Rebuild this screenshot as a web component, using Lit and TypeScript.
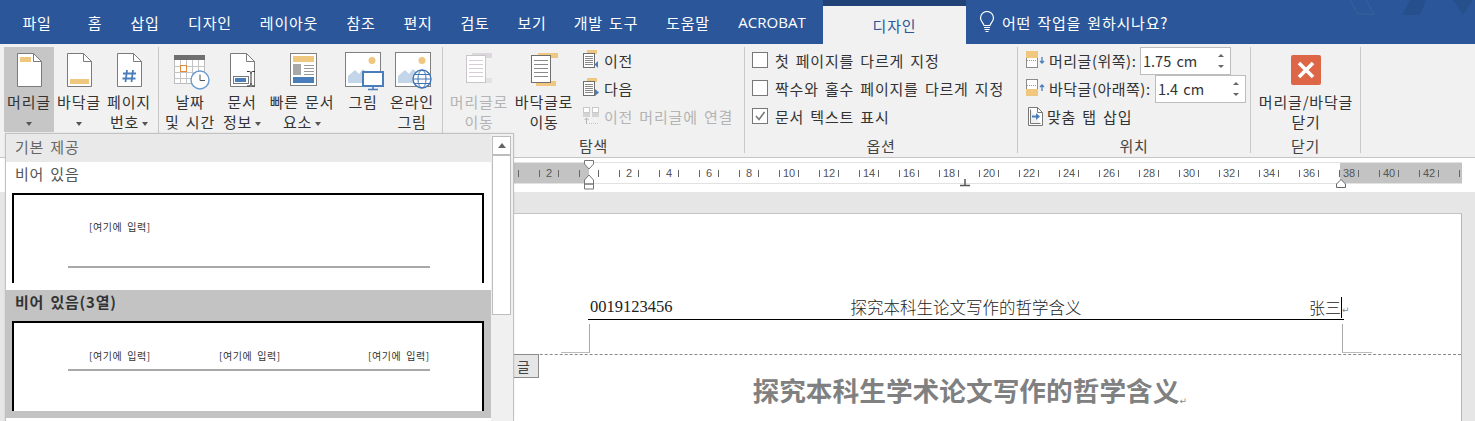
import { LitElement, html, css, svg } from "lit";
import { customElement } from "lit/decorators.js";

const S = "#7b7b7b";
const O = "#efc77e";
const B = "#4a7ebb";

const page = svg`<path d="M9.5 3.5H25.5L33.5 11.5V36.5H9.5Z" fill="#fff" stroke="${S}"/><path d="M25.5 3.5V11.5H33.5" fill="none" stroke="${S}"/>`;
const lines = (x: number, w: number, ys: number[], c: string) =>
  ys.map((y) => svg`<path d="M${x} ${y}.5h${w}" stroke="${c}"/>`);

const pictureBase = (x: number) => svg`
  <rect x="${x}.5" y="2.5" width="35" height="34" fill="#fff" stroke="#808080"/>
  <circle cx="${x + 27}" cy="10.5" r="3.5" fill="${O}"/>
  <path d="M${x + 3} 33V26L${x + 10} 20L${x + 14} 24L${x + 18} 19L${x + 26} 26V33Z" fill="#c3d5e9"/>`;

const large: Record<string, unknown> = {
  header: svg`${page}<rect x="12" y="7" width="11" height="5" fill="${O}"/>`,
  footer: svg`${page}<rect x="12" y="29" width="19" height="5" fill="${O}"/>`,
  number: svg`${page}<path d="M19 20L17.5 32M25 20L23.5 32M15 23.5H28M14.5 28.5H27.5" fill="none" stroke="${B}" stroke-width="1.8"/>`,
  date: svg`
    <rect x="5.5" y="5.5" width="30" height="28" fill="#fff" stroke="#bdbdbd"/>
    <rect x="5" y="5" width="31" height="5" fill="#6f6f6f"/>
    <path d="M5 16.5H36M5 22.5H36M5 28.5H36M11.5 10V33M17.5 10V33M23.5 10V33M29.5 10V33" stroke="#c4c4c4" fill="none"/>
    <rect x="11.5" y="15.5" width="6" height="6" fill="#fff" stroke="#e08a3c"/>
    <circle cx="31" cy="30" r="9" fill="#fff" stroke="#6c9bd0" stroke-width="1.4"/>
    <path d="M31 24.5V30.5H36" fill="none" stroke="#555"/>`,
  info: svg`${page}
    <rect x="12.5" y="26.5" width="15" height="7" fill="#fff" stroke="#777"/>
    <rect x="14" y="28" width="11" height="4" fill="${B}"/>
    <path d="M26 21.5H28.5C30 21.5 30 23 30 24V33C30 34 30 36 28 36H26M34 21.5H31.5C30 21.5 30 23 30 24M34 36H32C30 36 30 34 30 33" fill="none" stroke="#333"/>`,
  parts: svg`
    <rect x="9.5" y="3.5" width="26" height="32" fill="#fff" stroke="#808080"/>
    <rect x="12" y="6" width="21" height="6" fill="${O}"/>
    <rect x="12" y="14" width="8" height="11" fill="#a8a8a8"/>
    ${lines(23, 10, [15, 18, 21, 24], "#999")}
    <rect x="12" y="27" width="21" height="6" fill="${B}"/>`,
  picture: svg`${pictureBase(3)}
    <rect x="21" y="22" width="20" height="14" fill="#fff" stroke="#4a7ebb" stroke-width="2"/>
    <path d="M31 36V39M26 39.5H36" stroke="${B}" stroke-width="1.6"/>`,
  online: svg`${pictureBase(4)}
    <circle cx="31" cy="29" r="9" fill="#fff" stroke="#3f74b5" stroke-width="1.4"/>
    <ellipse cx="31" cy="29" rx="4" ry="9" fill="none" stroke="#3f74b5"/>
    <path d="M22 29H40M23.5 24.5H38.5M23.5 33.5H38.5" stroke="#3f74b5" fill="none"/>`,
  toHeader: svg`
    <rect x="14" y="3" width="20" height="5" fill="#dcd7dc"/>
    <rect x="14" y="28" width="20" height="5" fill="#e2e2e2"/>
    <rect x="8.5" y="5.5" width="19" height="27" fill="#fff" stroke="#c9c6c9"/>
    ${lines(11, 14, [10, 14, 18, 22, 26], "#d8ccd8")}`,
  toFooter: svg`
    <rect x="15" y="3" width="20" height="5" fill="${O}"/>
    <rect x="13" y="31" width="20" height="5" fill="${O}"/>
    <rect x="8.5" y="5.5" width="19" height="27" fill="#fff" stroke="#6f6f6f"/>
    ${lines(11, 14, [10, 14, 18, 22, 26], "#8a8a8a")}`,
};

const navIcon = (dir: number) => svg`
  <svg class="ic16" viewBox="0 0 18 20" width="18" height="20">
    <rect x="5" y="0" width="10" height="4" fill="${O}"/>
    <rect x="1.5" y="3.5" width="11" height="14" fill="#fff" stroke="#6f6f6f"/>
    ${lines(3, 8, [6, 8, 10, 12, 14], "#888")}
    <path d="${dir < 0 ? "M16 11V18L12.5 14.5Z" : "M13 11V18L17 14.5Z"}" fill="${B}"/>
  </svg>`;

const linkIcon = svg`
  <svg class="ic16" viewBox="0 0 18 20" width="18" height="20">
    <rect x="1.5" y="1.5" width="6" height="5" fill="#fff" stroke="#c8c8c8"/>
    <rect x="10.5" y="1.5" width="6" height="5" fill="#fff" stroke="#c8c8c8"/>
    <rect x="1" y="7" width="7" height="4" fill="#d4d4d4"/>
    <rect x="10" y="7" width="7" height="4" fill="#d4d4d4"/>
    <path d="M4.5 18V12M2.5 14L4.5 12L6.5 14" fill="none" stroke="#b5b5b5"/>
    <path d="M7 17.5H17" stroke="#c4c4c4" stroke-dasharray="1 1"/>
  </svg>`;

const posIcon = (top: boolean) => svg`
  <svg viewBox="0 0 20 18" width="20" height="18" class="posic">
    <rect x="0.5" y="0.5" width="11" height="16" fill="#fff" stroke="#8a8a8a"/>
    <rect x="0" y="${top ? 0 : 10}" width="12" height="7" fill="${O}"/>
    <path d="${top ? "M1 9.5H12" : "M1 6.5H12"}" stroke="#999" stroke-dasharray="1 1"/>
    <path d="${top ? "M16 6V12M14 10L16 12L18 10" : "M16 6V12M14 8L16 6L18 8"}" fill="none" stroke="${B}" stroke-width="1.3"/>
  </svg>`;

const tabIcon = svg`
  <svg viewBox="0 0 18 20" width="18" height="20" class="posic">
    <path d="M2.5 1.5H11.5L16.5 6.5V19.5H2.5Z M4.5 3.5V17.5H14.5" fill="#fff" stroke="#777"/>
    <path d="M11.5 1.5V6.5H16.5" fill="none" stroke="#777"/>
    <path d="M6 10.5H11" stroke="${B}" stroke-width="2"/><path d="M10 7L14 10.5L10 14Z" fill="${B}"/>
  </svg>`;

const TABS: [string, number][] = [
  ["파일", 68], ["홈", 48], ["삽입", 52], ["디자인", 78], ["레이아웃", 80], ["참조", 64],
  ["편지", 50], ["검토", 64], ["보기", 50], ["개발 도구", 98], ["도움말", 66], ["ACROBAT", 102],
];

type Btn = { a: string; b?: string; icon: string; w: number; caret?: 1 | 2; off?: boolean; sel?: boolean };
const G1: Btn[] = [
  { a: "머리글", icon: "header", w: 50, caret: 2, sel: true },
  { a: "바닥글", icon: "footer", w: 50, caret: 2 },
  { a: "페이지", b: "번호", icon: "number", w: 50, caret: 1 },
];
const G2: Btn[] = [
  { a: "날짜", b: "및 시간", icon: "date", w: 62 },
  { a: "문서", b: "정보", icon: "info", w: 42, caret: 1 },
  { a: "빠른 문서", b: "요소", icon: "parts", w: 78, caret: 1 },
  { a: "그림", icon: "picture", w: 44 },
  { a: "온라인", b: "그림", icon: "online", w: 54 },
];
const G3: Btn[] = [
  { a: "머리글로", b: "이동", icon: "toHeader", w: 68, off: true },
  { a: "바닥글로", b: "이동", icon: "toFooter", w: 62 },
];

const CELLS = Array.from({ length: 25 }, (_, i) => {
  const n = (i - 2) * 2;
  return n === 0 || n > 42 ? "" : String(Math.abs(n));
});

@customElement("app-root")
export class AppRoot extends LitElement {
  static styles = css`
    :host { display: block; position: relative; width: 1475px; height: 421px; overflow: hidden; background: #fff;
      font-family: "Noto Sans CJK KR", "Liberation Sans", sans-serif; font-size: 15px; color: #333; letter-spacing: .8px; word-spacing: 2px; }
    .titlebar { position: relative; display: flex; height: 44px; background: #2b579a; padding-left: 3px; color: #fff; }
    .tab { display: flex; align-items: center; justify-content: center; white-space: nowrap; }
    .tab.latin { font-family: "Open Sans", "Liberation Sans", sans-serif; font-size: 15px; letter-spacing: 0; }
    .ctx { width: 143px; border-top: 6px solid #204277; background: #f1f1f1; color: #2b579a; display: flex; align-items: center; justify-content: center; }
    .tell { display: flex; align-items: center; gap: 7px; padding-left: 13px; }
    .deco { position: absolute; right: 0; top: 0; }
    .ribbon { display: flex; padding: 3px 0 0 4px; box-sizing: border-box; background: #f1f1f1; border-bottom: 1px solid #c6c6c6; height: 114px; }
    .grp { height: 106px; border-right: 1px solid #c8c8c8; box-sizing: border-box; display: flex; flex-direction: column; flex: none; }
    .g1 { width: 155px; } .g2 { width: 284px; } .g3 { width: 302px; } .g4 { width: 273px; } .g5 { width: 233px; } .g6 { width: 110px; }
    .body { flex: none; height: 85px; display: flex; }
    .glabel { text-align: center; line-height: 20px; margin-top: 4px; color: #444; }
    .btn { flex: none; height: 85px; display: flex; flex-direction: column; align-items: center; padding-top: 3px; box-sizing: border-box; line-height: 20px; white-space: nowrap; }
    .btn svg.big { display: block; height: 42px; width: 42px; flex: none; }
    .btn.sel { background: #c6c6c6; }
    .off { color: #b4b4b4; }
    .caret { display: inline-block; width: 0; height: 0; border: 3.5px solid transparent; border-top: 4px solid #555; border-bottom: 0; vertical-align: middle; margin-left: 3px; }
    .caret.solo { margin-left: 0; }
    .ml2 { margin-left: 2px; }
    .col { display: flex; flex-direction: column; padding-left: 7px; margin-top: -1px; }
    .row { display: flex; align-items: center; height: 28px; gap: 4px; white-space: nowrap; }
    .ic16 { flex: none; display: block; }
    .opts { padding-left: 7px; }
    .chk { width: 14px; height: 14px; border: 1px solid #777; background: #fff; margin-right: 3px; flex: none; display: block; }
    .pos { padding-left: 8px; display: flex; flex-direction: column; margin-top: -1px; }
    .posic { flex: none; display: block; }
    .lab1 { width: 91px; letter-spacing: .5px; } .lab2 { width: 106px; letter-spacing: .5px; }
    .row.p { gap: 3px; }
    .spin { width: 91px; height: 28px; box-sizing: border-box; border: 1px solid #bdbdbd; background: #fff; display: flex; align-items: center; justify-content: space-between; padding: 0 6px 0 2px; letter-spacing: 0; margin: 1px 0 0 -3px; font-size: 14.5px; }
    .arrows { display: flex; flex-direction: column; gap: 8px; }
    .up { display: block; width: 0; height: 0; border: 3px solid transparent; border-bottom: 3px solid #666; border-top: 0; }
    .dn { display: block; width: 0; height: 0; border: 3px solid transparent; border-top: 3px solid #666; border-bottom: 0; }
    .close { width: 110px; padding-top: 8px; box-sizing: border-box; display: flex; flex-direction: column; align-items: center; line-height: 20px; height: 85px; white-space: nowrap; }
    .close svg { margin-bottom: 7px; display: block; }
    .rulerband { height: 34px; padding-top: 4px; box-sizing: border-box; background: #fff; }
    .ruler { position: relative; margin-left: 489px; width: 973px; height: 22px; box-sizing: border-box; border-top: 1px solid #e2e2e2; border-bottom: 1px solid #e2e2e2; overflow: visible;
      background: linear-gradient(90deg, #c3c3c3 100px, #fff 100px, #fff 851px, #c3c3c3 851px); }
    .cells { display: flex; height: 20px; width: 973px; overflow: hidden; }
    .cell { flex: none; width: 40px; box-sizing: border-box; padding: 0 10px; display: flex; justify-content: space-between; align-items: center;
      font-family: "Liberation Sans", sans-serif; font-size: 11px; letter-spacing: 0; color: #555; }
    .tick { width: 1px; height: 7px; background: #666; flex: none; }
    .num { flex: none; line-height: 20px; }
    .mark { position: absolute; }
    .grey { background: #e6e6e6; height: 21px; }
    .doc { display: flex; background: #e6e6e6; height: 208px; }
    .page { margin-left: 400px; width: 1062px; height: 208px; box-sizing: border-box; background: #fff; border-top: 1px solid #c4c4c4; border-right: 1px solid #b4b4b4; position: relative; }
    .inner { margin-left: 188px; width: 756px; padding-top: 83px; }
    .inner.nopad { padding-top: 0; }
    .hdr { display: grid; grid-template-columns: 1fr auto 1fr; grid-template-rows: 22px; align-items: start; height: 22px; border-bottom: 1px solid #000; font-family: "Noto Sans CJK SC", sans-serif; font-size: 16.5px; letter-spacing: 0; word-spacing: 0; color: #222; font-weight: 300; line-height: 20px; }
    .hdr .l { font-family: "Liberation Serif", serif; padding: 0 0 0 2px; }
    .hdr .r { justify-self: end; position: relative; display: flex; font-size: 16px; margin-right: 2px; }
    .caretline { width: 1px; height: 21px; background: #000; }
    .ret { font-family: "DejaVu Sans", sans-serif; font-size: 9px; color: #888; font-weight: 400; letter-spacing: 0; position: absolute; left: 100%; bottom: 0; line-height: 16px; }
    .marks { display: flex; justify-content: space-between; margin: 4px -28px 0 -27px; height: 30px; }
    .m { width: 29px; height: 29px; box-sizing: border-box; border-bottom: 1px solid #bbb; }
    .m.a { border-right: 1px solid #aaa; }
    .m.b { border-left: 1px solid #aaa; width: 30px; }
    .dash { border-top: 1px dashed #8a8a8a; }
    .title { font-family: "Noto Sans CJK SC", sans-serif; font-weight: 700; font-size: 26.7px; letter-spacing: 0; word-spacing: 0; line-height: 38px; color: #808080; text-align: center; padding-top: 16px; }
    .title .wrap { position: relative; }
    .tag { position: absolute; left: 88px; top: 140px; width: 51px; height: 24px; box-sizing: border-box; background: #e6e6e6; border: 1px solid #8a8a8a; display: flex; align-items: center; justify-content: flex-end; padding-right: 8px; font-size: 14px; letter-spacing: 0; color: #444; }
    .menu { position: absolute; left: 5px; top: 133px; width: 509px; height: 288px; box-sizing: border-box; background: #fff; border: 1px solid #c2c2c2; border-bottom: 0; display: flex; box-shadow: 0 0 2px rgba(0,0,0,.1); }
    .list { width: 485px; flex: none; }
    .mhead { height: 28px; background: #e9e9e9; color: #666; line-height: 26px; padding-left: 9px; }
    .item-t { height: 24px; line-height: 24px; padding-left: 9px; color: #555; }
    .item1 { height: 128px; }
    .sel-item { background: #c3c3c3; height: 128px; }
    .sel-item .item-t { color: #333; font-weight: 700; height: 24px; line-height: 24px; }
    .preview { margin: 7px 0 0 6px; width: 472px; height: 90px; box-sizing: border-box; background: #fff; border: 2px solid #000; border-bottom: 0; font-size: 10px; letter-spacing: .6px; word-spacing: 2px; color: #333; }
    .slots { display: grid; grid-template-columns: 130px 149px 1fr; padding-left: 75px; line-height: 14px; height: 14px; white-space: nowrap; }
    .pline { margin-left: 54px; width: 362px; height: 2px; background: #a8a8a8; }
    .p1 .slots { padding-top: 25px; } .p1 .pline { margin-top: 32px; }
    .p2 .slots { padding-top: 26px; } .p2 .pline { margin-top: 6px; }
    .track { flex: 1; background: #f0f0f0; padding: 2px 2px 0 1px; display: flex; flex-direction: column; }
    .sb-up { height: 19px; box-sizing: border-box; background: #fff; border: 1px solid #bdbdbd; display: flex; align-items: center; justify-content: center; }
    .sb-up i { display: block; width: 0; height: 0; border: 4px solid transparent; border-bottom: 5px solid #666; border-top: 0; }
    .thumb { height: 160px; box-sizing: border-box; background: #fff; border: 1px solid #bdbdbd; }
  `;

  private btn(b: Btn) {
    const cls = `btn ${b.sel ? "sel" : ""} ${b.off ? "off" : ""}`;
    return html`<div class=${cls} style="width:${b.w}px">
      <svg class="big" viewBox="0 0 42 42">${large[b.icon]}</svg>
      <div>${b.a}</div>
      ${b.b ? html`<div>${b.b}${b.caret === 1 ? html`<i class="caret"></i>` : ""}</div>` : ""}
      ${b.caret === 2 ? html`<div><i class="caret solo"></i></div>` : ""}
    </div>`;
  }

  render() {
    return html`
      <div class="titlebar">
        ${TABS.map(([t, w]) => html`<div class="tab ${t === "ACROBAT" ? "latin" : ""}" style="width:${w}px">${t}</div>`)}
        <div class="ctx">디자인</div>
        <div class="tell">
          <svg width="16" height="22" viewBox="0 0 16 22">
            <path d="M5 14.5C4.5 12 1.5 10.5 1.5 7A6.5 6.5 0 0 1 14.5 7C14.5 10.5 11.5 12 11 14.5Z" fill="none" stroke="#fff" stroke-width="1.2"/>
            <path d="M5 16.5H11M5.5 18.5H10.5M6.5 20.5H9.5" stroke="#fff" stroke-width="1.2"/>
          </svg>
          <span>어떤 작업을 원하시나요?</span>
        </div>
        <svg class="deco" width="125" height="16" viewBox="0 0 125 16">
          <path d="M0 0L8 14H24L16 0" fill="none" stroke="#3b6299"/>
          <path d="M52 15L60 0H76L70 15Z" fill="#26508c"/>
          <path d="M103 0H123L113 15Z" fill="#26508c"/>
        </svg>
      </div>

      <div class="ribbon">
        <div class="grp g1"><div class="body">${G1.map((b) => this.btn(b))}</div></div>
        <div class="grp g2"><div class="body">${G2.map((b) => this.btn(b))}</div></div>
        <div class="grp g3">
          <div class="body">
            <div class="ml2"></div>
            ${G3.map((b) => this.btn(b))}
            <div class="col">
              <div class="row">${navIcon(-1)}<span>이전</span></div>
              <div class="row">${navIcon(1)}<span>다음</span></div>
              <div class="row off">${linkIcon}<span>이전 머리글에 연결</span></div>
            </div>
          </div>
          <div class="glabel">탐색</div>
        </div>
        <div class="grp g4">
          <div class="body">
            <div class="col opts">
              <div class="row"><i class="chk"></i><span>첫 페이지를 다르게 지정</span></div>
              <div class="row"><i class="chk"></i><span>짝수와 홀수 페이지를 다르게 지정</span></div>
              <div class="row">
                <svg class="chk" viewBox="0 0 14 14"><path d="M3 7L6 10.5L11.5 3" fill="none" stroke="#777" stroke-width="1.6"/></svg>
                <span>문서 텍스트 표시</span>
              </div>
            </div>
          </div>
          <div class="glabel">옵션</div>
        </div>
        <div class="grp g5">
          <div class="body">
            <div class="pos">
              <div class="row p">${posIcon(true)}<span class="lab1">머리글(위쪽):</span>
                <div class="spin"><span>1.75 cm</span><span class="arrows"><i class="up"></i><i class="dn"></i></span></div></div>
              <div class="row p">${posIcon(false)}<span class="lab2">바닥글(아래쪽):</span>
                <div class="spin"><span>1.4 cm</span><span class="arrows"><i class="up"></i><i class="dn"></i></span></div></div>
              <div class="row p">${tabIcon}<span>맞춤 탭 삽입</span></div>
            </div>
          </div>
          <div class="glabel">위치</div>
        </div>
        <div class="grp g6">
          <div class="close">
            <svg width="30" height="30" viewBox="0 0 30 30">
              <rect width="30" height="30" rx="2" fill="#dd6647"/>
              <path d="M8 8L22 22M22 8L8 22" stroke="#fff" stroke-width="3.6"/>
            </svg>
            <div>머리글/바닥글</div>
            <div>닫기</div>
          </div>
          <div class="glabel">닫기</div>
        </div>
      </div>

      <div class="rulerband">
        <div class="ruler">
          <div class="cells">
            ${CELLS.map((c) => html`<div class="cell"><i class="tick"></i><span class="num">${c}</span><i class="tick"></i></div>`)}
          </div>
          <svg class="mark" style="left:93px;top:-3px" width="14" height="30" viewBox="0 0 14 30">
            <path d="M2.5 .5H11.5V4L7 9L2.5 4ZM7 15L11.5 20V24H2.5V20Z M2.5 24H11.5V29H2.5Z" fill="#fff" stroke="#777"/>
          </svg>
          <svg class="mark" style="left:470px;top:16px" width="12" height="8" viewBox="0 0 12 8">
            <path d="M6 0V6M1 6.5H11" stroke="#555" stroke-width="1.5"/>
          </svg>
          <svg class="mark" style="left:846px;top:15px" width="14" height="10" viewBox="0 0 14 10">
            <path d="M1.5 9.5V6L6 1.5L10.5 6V9.5Z" fill="#fff" stroke="#666"/>
          </svg>
        </div>
      </div>

      <div class="grey"></div>
      <div class="doc">
        <div class="page">
          <div class="inner">
            <div class="hdr">
              <span class="l">0019123456</span>
              <span>探究本科生论文写作的哲学含义</span>
              <span class="r">张三<i class="caretline"></i><span class="ret">↵</span></span>
            </div>
            <div class="marks"><div class="m a"></div><div class="m b"></div></div>
          </div>
          <div class="dash"></div>
          <div class="tag">글</div>
          <div class="inner nopad">
            <div class="title"><span class="wrap">探究本科生学术论文写作的哲学含义<span class="ret">↵</span></span></div>
          </div>
        </div>
      </div>

      <div class="menu">
        <div class="list">
          <div class="mhead">기본 제공</div>
          <div class="item1">
            <div class="item-t">비어 있음</div>
            <div class="preview p1">
              <div class="slots"><span>[여기에 입력]</span></div>
              <div class="pline"></div>
            </div>
          </div>
          <div class="sel-item">
            <div class="item-t">비어 있음(3열)</div>
            <div class="preview p2">
              <div class="slots"><span>[여기에 입력]</span><span>[여기에 입력]</span><span>[여기에 입력]</span></div>
              <div class="pline"></div>
            </div>
          </div>
        </div>
        <div class="track">
          <div class="sb-up"><i></i></div>
          <div class="thumb"></div>
        </div>
      </div>
    `;
  }
}
